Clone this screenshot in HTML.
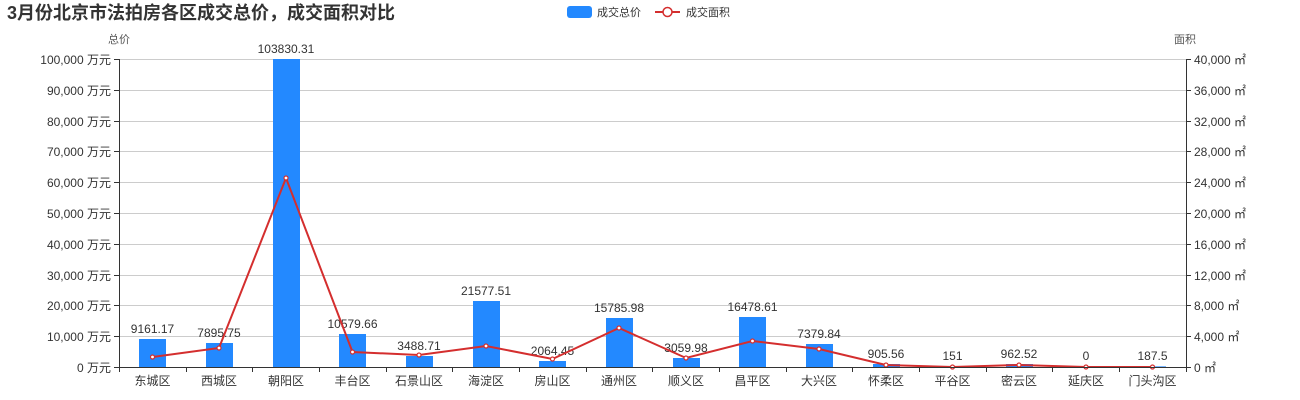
<!DOCTYPE html><html><head><meta charset="utf-8"><style>body{margin:0;background:#fff;}svg{display:block;font-family:"Liberation Sans","Noto Sans CJK SC",sans-serif;}</style></head><body>
<svg width="1300" height="400" xmlns="http://www.w3.org/2000/svg">
<text x="7" y="19" font-size="18" font-weight="bold" fill="#333">3月份北京市法拍房各区成交总价，成交面积对比</text>
<rect x="567" y="6" width="25" height="12" rx="3" fill="#2389ff"/>
<text x="597" y="16" font-size="11" fill="#333">成交总价</text>
<line x1="655" y1="12" x2="680" y2="12" stroke="#d42e2e" stroke-width="2"/>
<circle cx="667.5" cy="12" r="4.5" fill="#fff" stroke="#d42e2e" stroke-width="1.5"/>
<text x="686" y="16" font-size="11" fill="#333">成交面积</text>
<text x="108" y="43" font-size="11" fill="#555">总价</text>
<text x="1174" y="43" font-size="11" fill="#555">面积</text>
<g stroke="#ccc" stroke-width="1">
<line x1="119" y1="59.5" x2="1186" y2="59.5"/><line x1="119" y1="90.5" x2="1186" y2="90.5"/><line x1="119" y1="121.5" x2="1186" y2="121.5"/><line x1="119" y1="151.5" x2="1186" y2="151.5"/><line x1="119" y1="182.5" x2="1186" y2="182.5"/><line x1="119" y1="213.5" x2="1186" y2="213.5"/><line x1="119" y1="244.5" x2="1186" y2="244.5"/><line x1="119" y1="275.5" x2="1186" y2="275.5"/><line x1="119" y1="305.5" x2="1186" y2="305.5"/><line x1="119" y1="336.5" x2="1186" y2="336.5"/>
</g>
<g fill="#2389ff">
<rect x="139" y="339" width="27" height="28"/><rect x="206" y="343" width="27" height="24"/><rect x="273" y="59" width="27" height="308"/><rect x="339" y="334" width="27" height="33"/><rect x="406" y="356" width="27" height="11"/><rect x="473" y="301" width="27" height="66"/><rect x="539" y="361" width="27" height="6"/><rect x="606" y="318" width="27" height="49"/><rect x="673" y="358" width="27" height="9"/><rect x="739" y="317" width="27" height="50"/><rect x="806" y="344" width="27" height="23"/><rect x="873" y="364" width="27" height="3"/><rect x="939" y="366.5" width="27" height="0.5"/><rect x="1006" y="364" width="27" height="3"/><rect x="1139" y="366.4" width="27" height="0.6"/>
</g>
<g font-size="12" fill="#333" text-anchor="middle">
<text x="152.5" y="333">9161.17</text><text x="219" y="337">7895.75</text><text x="286" y="53">103830.31</text><text x="352.5" y="328">10579.66</text><text x="419" y="350">3488.71</text><text x="486" y="295">21577.51</text><text x="552.5" y="355">2064.45</text><text x="619" y="312">15785.98</text><text x="686" y="352">3059.98</text><text x="752.5" y="311">16478.61</text><text x="819" y="338">7379.84</text><text x="886" y="358">905.56</text><text x="952.5" y="360">151</text><text x="1019" y="358">962.52</text><text x="1086" y="360">0</text><text x="1152.5" y="360">187.5</text>
</g>
<polyline fill="none" stroke="#d42e2e" stroke-width="2" points="152.5,357 219,348 286,178 352.5,352 419,355 486,346 552.5,359 619,328 686,358 752.5,341 819,349 886,365 952.5,367 1019,365 1086,367 1152.5,367"/>
<g fill="#fff" stroke="#d42e2e" stroke-width="1.2">
<circle cx="152.5" cy="357" r="2"/><circle cx="219" cy="348" r="2"/><circle cx="286" cy="178" r="2"/><circle cx="352.5" cy="352" r="2"/><circle cx="419" cy="355" r="2"/><circle cx="486" cy="346" r="2"/><circle cx="552.5" cy="359" r="2"/><circle cx="619" cy="328" r="2"/><circle cx="686" cy="358" r="2"/><circle cx="752.5" cy="341" r="2"/><circle cx="819" cy="349" r="2"/><circle cx="886" cy="365" r="2"/><circle cx="952.5" cy="367" r="2"/><circle cx="1019" cy="365" r="2"/><circle cx="1086" cy="367" r="2"/><circle cx="1152.5" cy="367" r="2"/>
</g>
<g stroke="#333" stroke-width="1">
<line x1="119.5" y1="59" x2="119.5" y2="367"/><line x1="1186.5" y1="59" x2="1186.5" y2="367"/><line x1="119" y1="367.5" x2="1187" y2="367.5"/>
<line x1="114" y1="59.5" x2="119" y2="59.5"/><line x1="114" y1="90.5" x2="119" y2="90.5"/><line x1="114" y1="121.5" x2="119" y2="121.5"/><line x1="114" y1="151.5" x2="119" y2="151.5"/><line x1="114" y1="182.5" x2="119" y2="182.5"/><line x1="114" y1="213.5" x2="119" y2="213.5"/><line x1="114" y1="244.5" x2="119" y2="244.5"/><line x1="114" y1="275.5" x2="119" y2="275.5"/><line x1="114" y1="305.5" x2="119" y2="305.5"/><line x1="114" y1="336.5" x2="119" y2="336.5"/><line x1="114" y1="367.5" x2="119" y2="367.5"/>
<line x1="1186" y1="59.5" x2="1191" y2="59.5"/><line x1="1186" y1="90.5" x2="1191" y2="90.5"/><line x1="1186" y1="121.5" x2="1191" y2="121.5"/><line x1="1186" y1="151.5" x2="1191" y2="151.5"/><line x1="1186" y1="182.5" x2="1191" y2="182.5"/><line x1="1186" y1="213.5" x2="1191" y2="213.5"/><line x1="1186" y1="244.5" x2="1191" y2="244.5"/><line x1="1186" y1="275.5" x2="1191" y2="275.5"/><line x1="1186" y1="305.5" x2="1191" y2="305.5"/><line x1="1186" y1="336.5" x2="1191" y2="336.5"/><line x1="1186" y1="367.5" x2="1191" y2="367.5"/>
<line x1="119.5" y1="367" x2="119.5" y2="372"/><line x1="186.5" y1="367" x2="186.5" y2="372"/><line x1="252.5" y1="367" x2="252.5" y2="372"/><line x1="319.5" y1="367" x2="319.5" y2="372"/><line x1="386.5" y1="367" x2="386.5" y2="372"/><line x1="452.5" y1="367" x2="452.5" y2="372"/><line x1="519.5" y1="367" x2="519.5" y2="372"/><line x1="586.5" y1="367" x2="586.5" y2="372"/><line x1="652.5" y1="367" x2="652.5" y2="372"/><line x1="719.5" y1="367" x2="719.5" y2="372"/><line x1="786.5" y1="367" x2="786.5" y2="372"/><line x1="852.5" y1="367" x2="852.5" y2="372"/><line x1="919.5" y1="367" x2="919.5" y2="372"/><line x1="986.5" y1="367" x2="986.5" y2="372"/><line x1="1052.5" y1="367" x2="1052.5" y2="372"/><line x1="1119.5" y1="367" x2="1119.5" y2="372"/><line x1="1186.5" y1="367" x2="1186.5" y2="372"/>
</g>
<g font-size="12" fill="#333" text-anchor="end">
<text x="111" y="64">100,000 万元</text><text x="111" y="95">90,000 万元</text><text x="111" y="126">80,000 万元</text><text x="111" y="156">70,000 万元</text><text x="111" y="187">60,000 万元</text><text x="111" y="218">50,000 万元</text><text x="111" y="249">40,000 万元</text><text x="111" y="280">30,000 万元</text><text x="111" y="310">20,000 万元</text><text x="111" y="341">10,000 万元</text><text x="111" y="372">0 万元</text>
</g>
<g font-size="12" fill="#333">
<text x="1194" y="64">40,000 ㎡</text><text x="1194" y="95">36,000 ㎡</text><text x="1194" y="126">32,000 ㎡</text><text x="1194" y="156">28,000 ㎡</text><text x="1194" y="187">24,000 ㎡</text><text x="1194" y="218">20,000 ㎡</text><text x="1194" y="249">16,000 ㎡</text><text x="1194" y="280">12,000 ㎡</text><text x="1194" y="310">8,000 ㎡</text><text x="1194" y="341">4,000 ㎡</text><text x="1194" y="372">0 ㎡</text>
</g>
<g font-size="12" fill="#333" text-anchor="middle">
<text x="152.5" y="385">东城区</text><text x="219" y="385">西城区</text><text x="286" y="385">朝阳区</text><text x="352.5" y="385">丰台区</text><text x="419" y="385">石景山区</text><text x="486" y="385">海淀区</text><text x="552.5" y="385">房山区</text><text x="619" y="385">通州区</text><text x="686" y="385">顺义区</text><text x="752.5" y="385">昌平区</text><text x="819" y="385">大兴区</text><text x="886" y="385">怀柔区</text><text x="952.5" y="385">平谷区</text><text x="1019" y="385">密云区</text><text x="1086" y="385">延庆区</text><text x="1152.5" y="385">门头沟区</text>
</g>
</svg>
</body></html>
